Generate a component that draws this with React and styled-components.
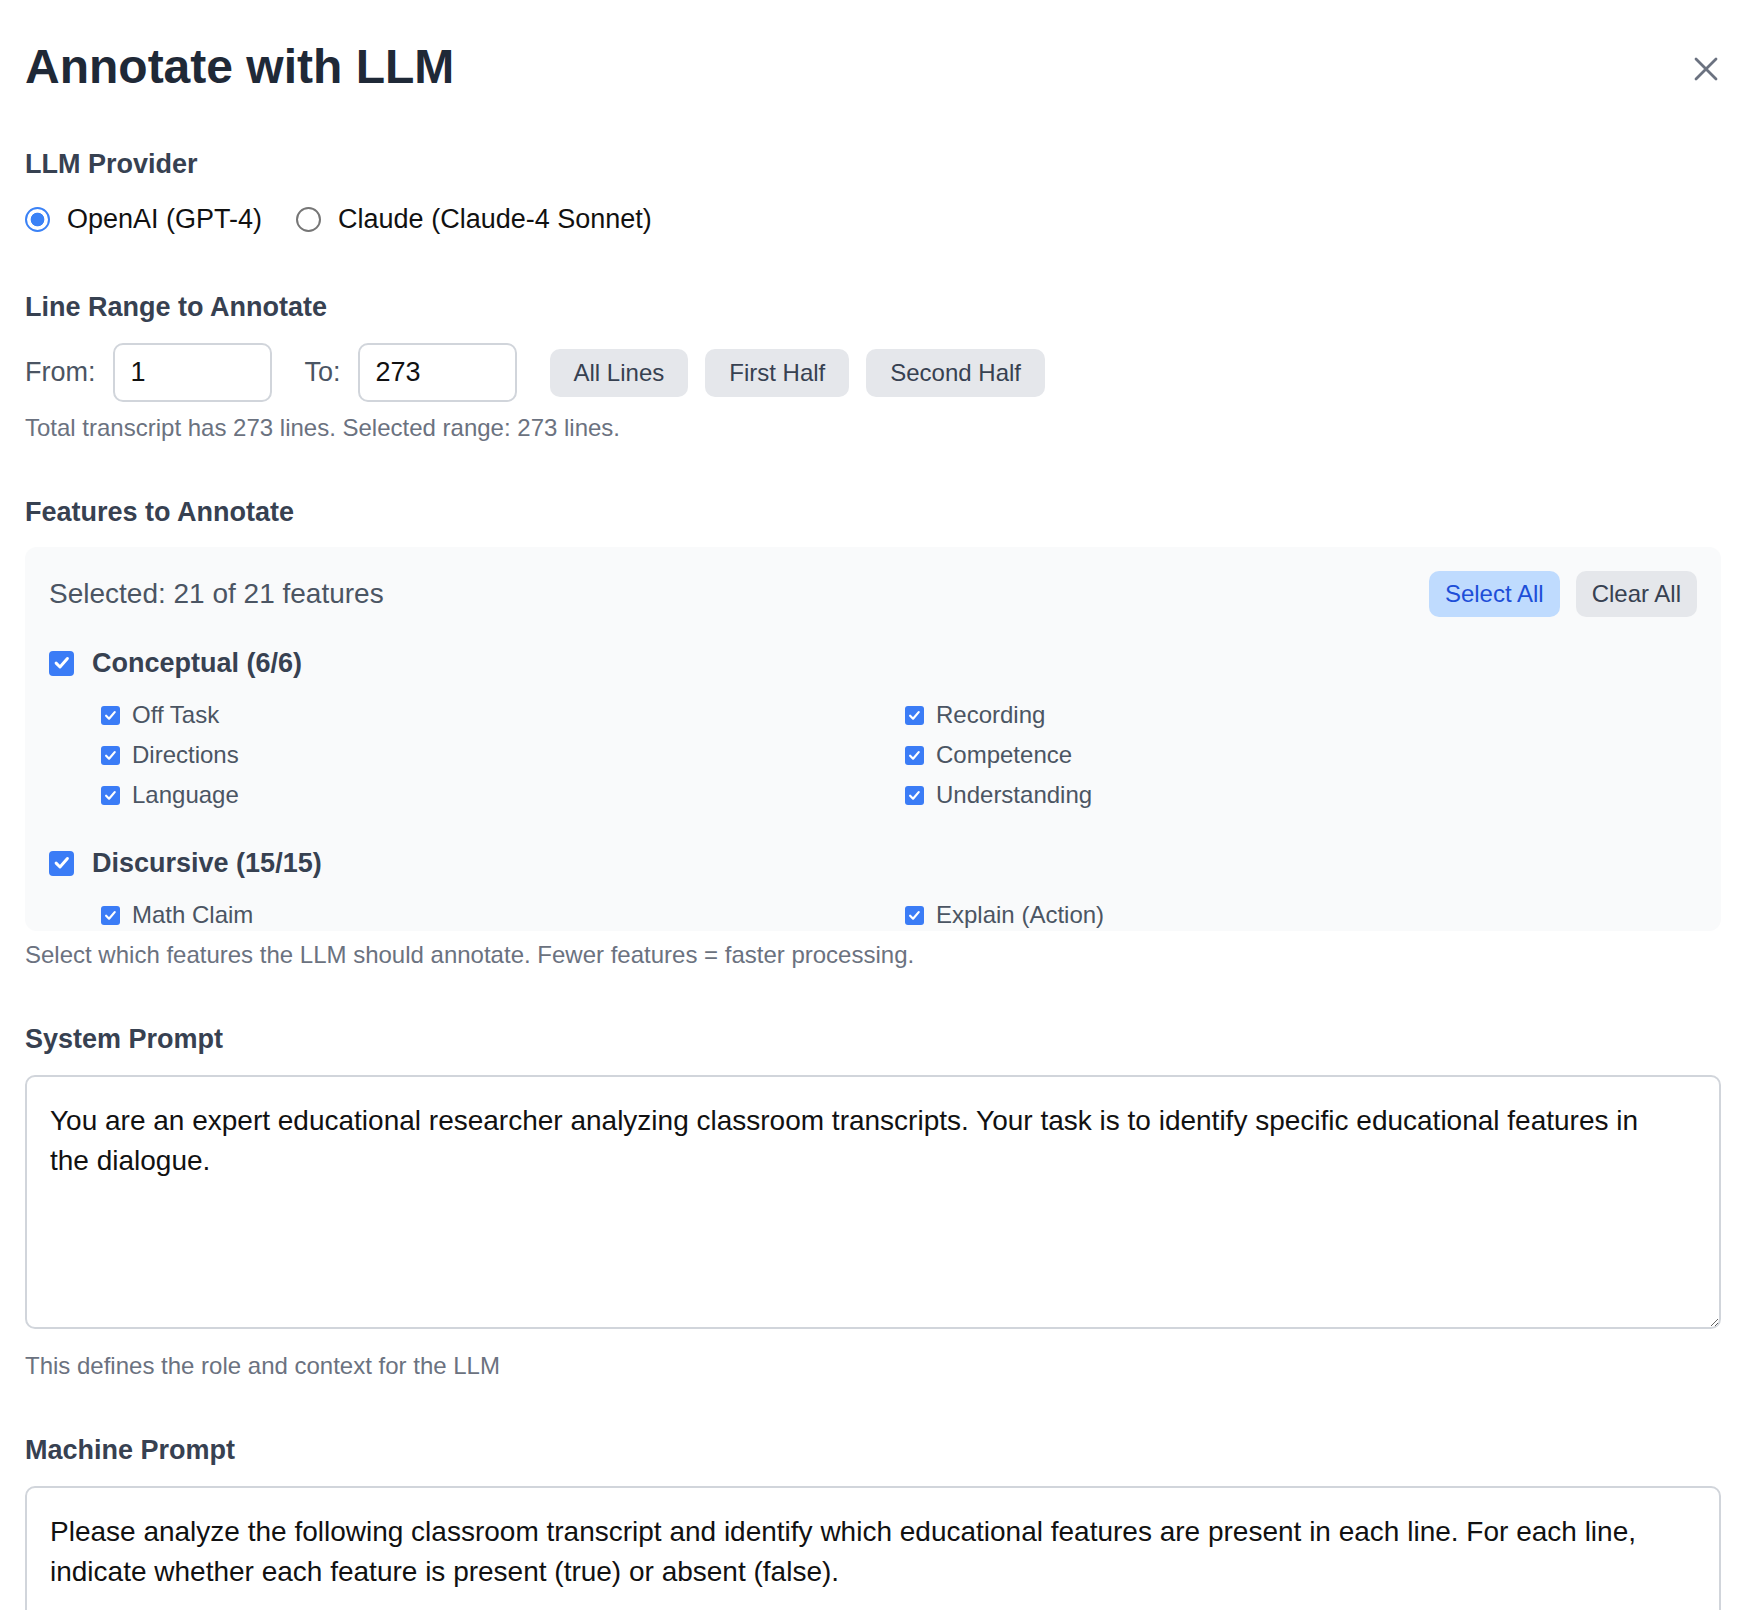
import React from 'react';
import styled, { createGlobalStyle } from 'styled-components';

const GlobalStyle = createGlobalStyle`
    html, body {
        margin: 0;
        padding: 0;
        background: #ffffff;
    }
    body {
        font-family: "Liberation Sans", Arial, Helvetica, sans-serif;
        color: #111827;
    }
    * {
        box-sizing: border-box;
    }
`;

const Modal = styled.div`
    width: 1752px;
    padding: 35px 31px 0 25px;
    background: #fff;
`;

const Header = styled.div`
    display: flex;
    align-items: center;
    justify-content: space-between;
    margin-bottom: 45px;
`;

const Title = styled.h2`
    margin: 0;
    font-size: 48px;
    line-height: 64px;
    font-weight: 700;
    color: #1f2937;
`;

const CloseButton = styled.button`
    width: 30px;
    height: 30px;
    margin-top: 4px;
    padding: 0;
    border: none;
    background: transparent;
    color: #6b7280;
    display: flex;
    align-items: center;
    justify-content: center;
    cursor: pointer;
`;

const Section = styled.div`
    margin-bottom: 48px;
`;

const Label = styled.div`
    font-size: 27px;
    line-height: 40px;
    font-weight: 700;
    color: #374151;
    margin-bottom: ${(p) => (p.$tight ? '15px' : '16px')};
`;

const Hint = styled.p`
    margin: ${(p) => p.$gap || '10px'} 0 0;
    font-size: 24px;
    line-height: 32px;
    color: #6b7280;
`;

const RadioGroup = styled.div`
    display: flex;
    align-items: center;
    gap: 34px;
    height: 40px;
`;

const RadioOption = styled.label`
    display: flex;
    align-items: center;
    gap: 17px;
    font-size: 27px;
    line-height: 40px;
    color: #111111;
    cursor: pointer;
`;

const RadioDot = styled.span`
    width: 25px;
    height: 25px;
    border-radius: 50%;
    flex-shrink: 0;
    border: ${(p) => (p.$checked ? '2.5px solid #3b82f6' : '2px solid #767676')};
    background: ${(p) =>
        p.$checked
            ? 'radial-gradient(circle, #3b82f6 0 6.5px, #ffffff 7.2px)'
            : '#ffffff'};
`;

const RangeRow = styled.div`
    display: flex;
    align-items: center;
    gap: 33px;
`;

const Field = styled.label`
    display: flex;
    align-items: center;
    gap: 17px;
    font-size: 27px;
    color: #4b5563;
`;

const NumberInput = styled.input`
    width: 159px;
    height: 59px;
    padding: 0 16px;
    border: 2px solid #d1d5db;
    border-radius: 10px;
    font-family: "Liberation Sans", Arial, sans-serif;
    font-size: 27px;
    color: #111111;
    background: #fff;
    outline: none;
`;

const ButtonGroup = styled.div`
    display: flex;
    gap: ${(p) => p.$gap || 17}px;
`;

const PillButton = styled.button`
    height: ${(p) => (p.$small ? '46px' : '48px')};
    padding: 0 ${(p) => (p.$small ? '16px' : '24px')};
    border: none;
    border-radius: 10px;
    font-family: "Liberation Sans", Arial, sans-serif;
    font-size: 24px;
    background: ${(p) => (p.$primary ? '#bfdbfe' : '#e5e7eb')};
    color: ${(p) => (p.$primary ? '#1d4ed8' : '#374151')};
    cursor: pointer;
`;

const FeaturePanel = styled.div`
    height: 384px;
    padding: 24px;
    border-radius: 12px;
    background: #f9fafb;
    overflow-y: auto;
    scrollbar-width: none;
    &::-webkit-scrollbar {
        display: none;
    }
`;

const PanelTop = styled.div`
    display: flex;
    align-items: center;
    justify-content: space-between;
    height: 46px;
    margin-bottom: 26px;
`;

const SelectedText = styled.span`
    font-size: 28px;
    color: #4b5563;
`;

const Group = styled.div`
    margin-bottom: 32px;
`;

const GroupHeader = styled.label`
    display: flex;
    align-items: center;
    gap: 18px;
    height: 40px;
    font-size: 27px;
    font-weight: 700;
    color: #374151;
`;

const ItemGrid = styled.div`
    display: grid;
    grid-template-columns: 1fr 1fr;
    column-gap: 12px;
    row-gap: 8px;
    margin: 16px 0 0 52px;
`;

const Item = styled.label`
    display: flex;
    align-items: center;
    gap: 12px;
    height: 32px;
    font-size: 24px;
    color: #4b5563;
`;

const Box = styled.span`
    width: ${(p) => p.$size}px;
    height: ${(p) => p.$size}px;
    border-radius: ${(p) => (p.$size > 20 ? 4 : 3)}px;
    background: #3b7cf6;
    flex-shrink: 0;
    display: flex;
    align-items: center;
    justify-content: center;
`;

const PromptArea = styled.textarea`
    display: block;
    width: 100%;
    height: ${(p) => p.$height || 254}px;
    padding: 24px 40px 24px 23px;
    border: 2px solid #d1d5db;
    border-radius: 10px;
    font-family: "Liberation Sans", Arial, sans-serif;
    font-size: 28px;
    line-height: 40px;
    color: #111111;
    background: #fff;
    resize: vertical;
    outline: none;
`;

const Check = ({ size }) => (
    <Box $size={size}>
        <svg width={size * 0.78} height={size * 0.78} viewBox="0 0 20 20" fill="none">
            <path
                d="M4.2 10.4 L8.2 14.4 L15.8 5.6"
                stroke="#fff"
                strokeWidth="3"
                strokeLinecap="round"
                strokeLinejoin="round"
            />
        </svg>
    </Box>
);

const groups = [
    {
        name: 'Conceptual',
        items: ['Off Task', 'Recording', 'Directions', 'Competence', 'Language', 'Understanding'],
    },
    {
        name: 'Discursive',
        items: [
            'Math Claim',
            'Explain (Action)',
            'Explain (Reason)',
            'Agree',
            'Disagree',
            'Build On',
            'Revoice',
            'Press',
            'Clarify',
            'Question',
            'Compare',
            'Justify',
            'Evidence',
            'Restate',
            'Add On',
        ],
    },
];

const systemPrompt =
    'You are an expert educational researcher analyzing classroom transcripts. Your task is to identify specific educational features in the dialogue.';

const machinePrompt =
    'Please analyze the following classroom transcript and identify which educational features are present in each line. For each line, indicate whether each feature is present (true) or absent (false).\n\nReturn your answer as JSON with one object per line, using the feature names as keys.';

export default function App() {
    return (
        <>
            <GlobalStyle />
            <Modal>
                <Header>
                    <Title>Annotate with LLM</Title>
                    <CloseButton aria-label="Close">
                        <svg width="30" height="30" viewBox="0 0 30 30" fill="none">
                            <path
                                d="M5 5 L25 25 M25 5 L5 25"
                                stroke="currentColor"
                                strokeWidth="2.8"
                                strokeLinecap="round"
                            />
                        </svg>
                    </CloseButton>
                </Header>

                <Section>
                    <Label $tight>LLM Provider</Label>
                    <RadioGroup>
                        <RadioOption>
                            <RadioDot $checked />
                            OpenAI (GPT-4)
                        </RadioOption>
                        <RadioOption>
                            <RadioDot />
                            Claude (Claude-4 Sonnet)
                        </RadioOption>
                    </RadioGroup>
                </Section>

                <Section>
                    <Label>Line Range to Annotate</Label>
                    <RangeRow>
                        <Field>
                            From:
                            <NumberInput readOnly value="1" />
                        </Field>
                        <Field>
                            To:
                            <NumberInput readOnly value="273" />
                        </Field>
                        <ButtonGroup>
                            <PillButton>All Lines</PillButton>
                            <PillButton>First Half</PillButton>
                            <PillButton>Second Half</PillButton>
                        </ButtonGroup>
                    </RangeRow>
                    <Hint>Total transcript has 273 lines. Selected range: 273 lines.</Hint>
                </Section>

                <Section>
                    <Label $tight>Features to Annotate</Label>
                    <FeaturePanel>
                        <PanelTop>
                            <SelectedText>Selected: 21 of 21 features</SelectedText>
                            <ButtonGroup $gap={16}>
                                <PillButton $small $primary>Select All</PillButton>
                                <PillButton $small>Clear All</PillButton>
                            </ButtonGroup>
                        </PanelTop>
                        {groups.map((g) => (
                            <Group key={g.name}>
                                <GroupHeader>
                                    <Check size={25} />
                                    {g.name} ({g.items.length}/{g.items.length})
                                </GroupHeader>
                                <ItemGrid>
                                    {g.items.map((it) => (
                                        <Item key={it}>
                                            <Check size={19} />
                                            {it}
                                        </Item>
                                    ))}
                                </ItemGrid>
                            </Group>
                        ))}
                    </FeaturePanel>
                    <Hint $gap="8px">
                        Select which features the LLM should annotate. Fewer features = faster processing.
                    </Hint>
                </Section>

                <Section>
                    <Label>System Prompt</Label>
                    <PromptArea readOnly defaultValue={systemPrompt} />
                    <Hint $gap="21px">This defines the role and context for the LLM</Hint>
                </Section>

                <Section>
                    <Label>Machine Prompt</Label>
                    <PromptArea readOnly $height={400} defaultValue={machinePrompt} />
                </Section>
            </Modal>
        </>
    );
}
